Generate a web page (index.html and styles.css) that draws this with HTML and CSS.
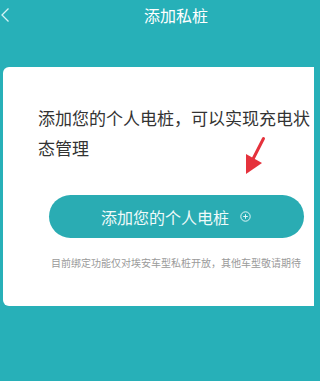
FILE: index.html
```html
<!DOCTYPE html>
<html lang="zh-CN">
<head>
<meta charset="utf-8">
<title>添加私桩</title>
<link rel="stylesheet" href="styles.css">
</head>
<body>
<div class="page">
  <header class="header">
    <svg class="back" width="12" height="16" viewBox="0 0 12 16"><path d="M8.5 1.5 L2 8 L8.5 14.5" fill="none" stroke="#d6f3f5" stroke-width="1.3"/></svg>
    <h1 class="title">添加私桩</h1>
  </header>
  <section class="card">
    <p class="desc">添加您的个人电桩，可以实现充电状态管理</p>
    <button class="add-btn"><span>添加您的个人电桩</span><svg class="plus" width="11" height="11" viewBox="0 0 11 11"><circle cx="5.5" cy="5.5" r="4.7" fill="none" stroke="#e2f6f7" stroke-width="1"/><path d="M5.5 3.2 V7.8 M3.2 5.5 H7.8" stroke="#e2f6f7" stroke-width="1"/></svg></button>
    <p class="note">目前绑定功能仅对埃安车型私桩开放，其他车型敬请期待</p>
    <svg class="pointer" width="28" height="44" viewBox="0 0 28 44"><path d="M23.5 4.5 L12 27" stroke="#e5323c" stroke-width="3" stroke-linecap="round"/><polygon points="6,40 6,20 22,29" fill="#e5323c"/></svg>
  </section>
</div>
</body>
</html>
```
FILE: styles.css
```css
html, body {
  margin: 0;
  padding: 0;
  background: #27b0b8;
  overflow: hidden;
  width: 314px;
  height: 381px;
}
.page {
  width: 314px;
  font-family: "Noto Sans CJK SC", "Noto Sans", sans-serif;
}
.header {
  position: relative;
  height: 67px;
  padding-left: 38px;
  box-sizing: border-box;
}
.back {
  position: absolute;
  left: 0;
  top: 7px;
}
.title {
  margin: 0;
  padding-top: 4px;
  text-align: center;
  font-size: 16px;
  line-height: 22px;
  font-weight: 400;
  color: #ffffff;
}
.card {
  position: relative;
  margin-left: 3px;
  width: 311px;
  height: 239px;
  box-sizing: border-box;
  background: #ffffff;
  border-radius: 6px 0 0 6px;
  padding: 36px 0 0 35px;
  display: flex;
  flex-direction: column;
  align-items: center;
}
.desc {
  margin: 0;
  align-self: stretch;
  font-size: 17px;
  line-height: 30px;
  color: #333333;
}
.add-btn {
  margin-top: 32px;
  width: 255px;
  height: 43px;
  flex-shrink: 0;
  border: none;
  border-radius: 22px;
  background: #2aacb3;
  color: #eefafa;
  font-family: inherit;
  font-size: 16px;
  display: flex;
  align-items: center;
  justify-content: center;
  gap: 11px;
  padding: 0;
}
.add-btn span {
  line-height: 20px;
}
.note {
  margin: 18px 0 0;
  font-size: 10px;
  line-height: 14px;
  color: #9a9a9a;
  white-space: nowrap;
}
.pointer {
  position: absolute;
  left: 237px;
  top: 67px;
}
```
